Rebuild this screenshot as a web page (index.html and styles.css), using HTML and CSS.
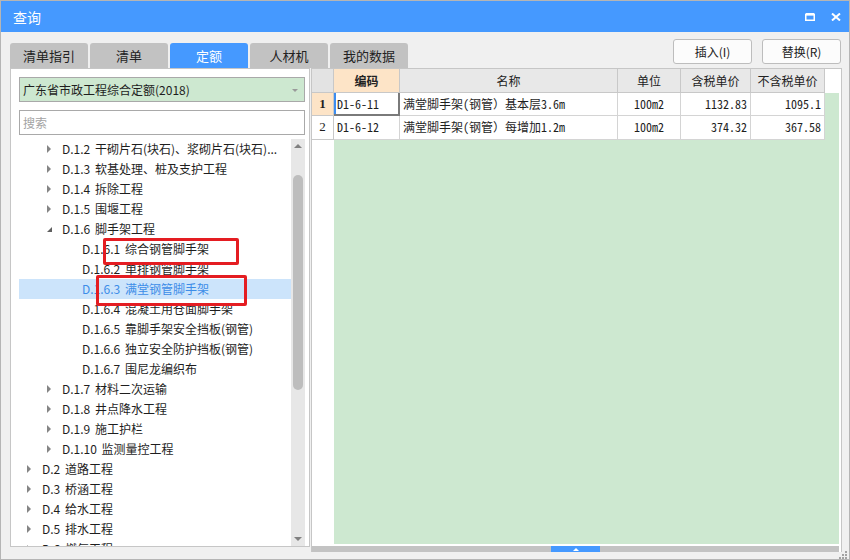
FILE: index.html
```html
<!DOCTYPE html>
<html lang="zh-CN">
<head>
    <meta charset="UTF-8">
    <title>查询</title>
    <link rel="stylesheet" href="styles.css">
</head>
<body>
    <div class="window">
        <div class="titlebar">
            <span class="title">查询</span>
            <div class="title-btns">
                <svg width="10" height="8" viewBox="0 0 10 8">
                    <path d="M0.75 1.5H9.25V7.25H0.75Z" fill="none" stroke="#fff" stroke-width="1.5"/>
                    <path d="M0.75 1.25H9.25" stroke="#fff" stroke-width="2.5"/>
                </svg>
                <svg width="10" height="8" viewBox="0 0 10 8">
                    <path d="M1 0.5L9 7.5M9 0.5L1 7.5" stroke="#fff" stroke-width="2"/>
                </svg>
            </div>
        </div>

        <div class="topbar">
            <div class="tabs">
                <div class="tab">清单指引</div>
                <div class="tab">清单</div>
                <div class="tab active">定额</div>
                <div class="tab">人材机</div>
                <div class="tab">我的数据</div>
            </div>
            <div class="actions">
                <button>插入(I)</button>
                <button>替换(R)</button>
            </div>
        </div>

        <div class="main">
            <div class="side">
                <div class="select">广东省市政工程综合定额(2018)<span class="caret"></span></div>
                <input class="search" type="text" placeholder="搜索">
                <div class="tree-wrap">
                    <ul class="tree">
                        <li class="lv2"><i class="arr"></i>D.1.2 干砌片石(块石)、浆砌片石(块石)...</li>
                        <li class="lv2"><i class="arr"></i>D.1.3 软基处理、桩及支护工程</li>
                        <li class="lv2"><i class="arr"></i>D.1.4 拆除工程</li>
                        <li class="lv2"><i class="arr"></i>D.1.5 围堰工程</li>
                        <li class="lv2"><i class="arr open"></i>D.1.6 脚手架工程</li>
                        <li class="lv3"><i class="arr none"></i>D.1.6.1 综合钢管脚手架</li>
                        <li class="lv3"><i class="arr none"></i>D.1.6.2 单排钢管脚手架</li>
                        <li class="lv3 selected"><i class="arr none"></i>D.1.6.3 满堂钢管脚手架</li>
                        <li class="lv3"><i class="arr none"></i>D.1.6.4 混凝土用仓面脚手架</li>
                        <li class="lv3"><i class="arr none"></i>D.1.6.5 靠脚手架安全挡板(钢管)</li>
                        <li class="lv3"><i class="arr none"></i>D.1.6.6 独立安全防护挡板(钢管)</li>
                        <li class="lv3"><i class="arr none"></i>D.1.6.7 围尼龙编织布</li>
                        <li class="lv2"><i class="arr"></i>D.1.7 材料二次运输</li>
                        <li class="lv2"><i class="arr"></i>D.1.8 井点降水工程</li>
                        <li class="lv2"><i class="arr"></i>D.1.9 施工护栏</li>
                        <li class="lv2"><i class="arr"></i>D.1.10 监测量控工程</li>
                        <li class="lv1"><i class="arr"></i>D.2 道路工程</li>
                        <li class="lv1"><i class="arr"></i>D.3 桥涵工程</li>
                        <li class="lv1"><i class="arr"></i>D.4 给水工程</li>
                        <li class="lv1"><i class="arr"></i>D.5 排水工程</li>
                        <li class="lv1"><i class="arr"></i>D.6 燃气工程</li>
                    </ul>
                    <div class="vscroll">
                        <span class="sc-up"></span>
                        <span class="thumb"></span>
                        <span class="sc-down"></span>
                    </div>
                </div>
                <!-- annotation boxes -->
                <div class="mark mark-1"></div>
                <div class="mark mark-2"></div>
            </div>

            <div class="grid-panel">
                <div class="grid">
                    <div class="hd corner"></div>
                    <div class="hd key">编码</div>
                    <div class="hd">名称</div>
                    <div class="hd">单位</div>
                    <div class="hd">含税单价</div>
                    <div class="hd">不含税单价</div>
                    <div class="blank"></div>

                    <div class="rh cur">1</div>
                    <div class="cell sel">D1-6-11</div>
                    <div class="cell">满堂脚手架(钢管）基本层3.6m</div>
                    <div class="cell mid">100m2</div>
                    <div class="cell num">1132.83</div>
                    <div class="cell num">1095.1</div>
                    <div class="green"></div>

                    <div class="rh">2</div>
                    <div class="cell">D1-6-12</div>
                    <div class="cell">满堂脚手架(钢管）每增加1.2m</div>
                    <div class="cell mid">100m2</div>
                    <div class="cell num">374.32</div>
                    <div class="cell num">367.58</div>
                    <div class="green"></div>

                    <div class="blank"></div>
                    <div class="green wide"></div>
                </div>
                <div class="hbar"><span class="hthumb"></span></div>
            </div>
        </div>

        <svg class="grip" width="8" height="8" viewBox="0 0 8 8">
            <rect x="6" y="0" width="2" height="2" fill="#a3a3a3"/>
            <rect x="3" y="3" width="2" height="2" fill="#a3a3a3"/>
            <rect x="6" y="3" width="2" height="2" fill="#a3a3a3"/>
            <rect x="0" y="6" width="2" height="2" fill="#a3a3a3"/>
            <rect x="3" y="6" width="2" height="2" fill="#a3a3a3"/>
            <rect x="6" y="6" width="2" height="2" fill="#a3a3a3"/>
        </svg>
    </div>
</body>
</html>
```

FILE: styles.css
```css
:root {
    --blue: #4599ff;
    --tab-grey: #c2c2c2;
    --panel-border: #c6c6c6;
    --input-border: #a9a9a9;
    --green: #cde8d0;
    --peach: #fde4c7;
    --head-grey: #e8e8e8;
    --text: #1e1e1e;
    --ui-font: "Noto Sans CJK SC", "Noto Sans", sans-serif;
    --mono-font: "Noto Sans Mono CJK SC", "Liberation Mono", "Noto Sans CJK SC", monospace;
}

* {
    margin: 0;
    padding: 0;
    box-sizing: border-box;
}

body {
    background: #ffffff;
    font-family: var(--ui-font);
    font-size: 12px;
    color: var(--text);
}

.window {
    position: relative;
    width: 850px;
    height: 560px;
    background: #f0f0f0;
    border: 1px solid #b5b5b5;
    display: flex;
    flex-direction: column;
}

/* title bar */
.titlebar {
    height: 31px;
    flex: none;
    background: var(--blue);
    display: flex;
    align-items: center;
    justify-content: space-between;
    padding: 0 8px 0 12px;
}

.title {
    color: #ffffff;
    font-size: 14px;
}

.title-btns {
    display: flex;
    gap: 16px;
    align-items: center;
}

.title-btns svg {
    display: block;
}

/* tabs + buttons */
.topbar {
    height: 36px;
    flex: none;
    display: flex;
    justify-content: space-between;
    padding: 0 8px 0 9px;
}

.tabs {
    align-self: flex-end;
    display: flex;
    gap: 2px;
}

.tab {
    width: 78px;
    height: 25px;
    line-height: 25px;
    text-align: center;
    font-size: 13px;
    background: var(--tab-grey);
    border-radius: 3px 3px 0 0;
    color: #222;
}

.tab.active {
    background: var(--blue);
    color: #ffffff;
}

.actions {
    margin-top: 7px;
    display: flex;
    gap: 10px;
}

.actions button {
    width: 79px;
    height: 25px;
    background: #fcfcfc;
    border: 1px solid #bdbdbd;
    border-radius: 3px;
    font-family: var(--ui-font);
    font-size: 12px;
    color: #222;
}

/* panels */
.main {
    display: flex;
    align-items: flex-start;
    gap: 1px;
    padding-left: 9px;
}

.side {
    position: relative;
    width: 300px;
    height: 479px;
    background: #ffffff;
    border: 1px solid var(--panel-border);
    padding: 8px 4px 0 8px;
    display: flex;
    flex-direction: column;
}

.select {
    position: relative;
    height: 25px;
    line-height: 23px;
    padding-left: 3px;
    background: var(--green);
    border: 1px solid var(--input-border);
    flex: none;
}

.caret {
    position: absolute;
    right: 6px;
    top: 11px;
    border-top: 3px solid #9a9a9a;
    border-left: 3px solid transparent;
    border-right: 3px solid transparent;
}

.search {
    margin-top: 8px;
    height: 25px;
    width: 100%;
    flex: none;
    border: 1px solid var(--input-border);
    padding-left: 3px;
    font-family: var(--ui-font);
    font-size: 12px;
    outline: none;
}

.search::placeholder {
    color: #a3a3a3;
}

.tree-wrap {
    margin-top: 4px;
    flex: 1;
    min-height: 0;
    display: flex;
}

.tree {
    flex: 1;
    list-style: none;
    overflow: hidden;
}

.tree li {
    height: 20px;
    line-height: 20px;
    white-space: nowrap;
    word-spacing: 2px;
    display: flex;
    align-items: center;
}

.tree li.lv1 { padding-left: 8px; }
.tree li.lv2 { padding-left: 28px; }
.tree li.lv3 { padding-left: 48px; }

.tree li.selected {
    background: #cce4fb;
    color: #3d8de8;
}

.arr {
    width: 15px;
    height: 20px;
    flex: none;
    position: relative;
}

.arr::before {
    content: "";
    position: absolute;
    left: 0;
    top: 6px;
    border-left: 4px solid #858585;
    border-top: 4px solid transparent;
    border-bottom: 4px solid transparent;
}

.arr.open::before {
    top: 8px;
    border-left: 5px solid transparent;
    border-top: 0;
    border-bottom: 5px solid #606060;
}

.arr.none::before {
    display: none;
}

.vscroll {
    width: 14px;
    flex: none;
    background: #e7e7e7;
    display: flex;
    flex-direction: column;
    align-items: center;
}

.sc-up,
.sc-down {
    width: 14px;
    height: 14px;
    display: flex;
    align-items: center;
    justify-content: center;
}

.sc-up::before {
    content: "";
    border-bottom: 4px solid #808080;
    border-left: 4px solid transparent;
    border-right: 4px solid transparent;
}

.sc-down {
    margin-top: auto;
}

.sc-down::before {
    content: "";
    border-top: 4px solid #808080;
    border-left: 4px solid transparent;
    border-right: 4px solid transparent;
}

.thumb {
    margin-top: 22px;
    width: 10px;
    height: 215px;
    border-radius: 5px;
    background: #bdbdbd;
}

.mark {
    position: absolute;
    border: 3px solid #e41d22;
    border-radius: 2px;
}

.mark-1 {
    left: 92px;
    top: 169px;
    width: 136px;
    height: 27px;
}

.mark-2 {
    left: 85px;
    top: 206px;
    width: 151px;
    height: 31px;
}

/* quota grid */
.grid-panel {
    width: 531px;
    height: 484px;
    background: #ffffff;
    border: 1px solid var(--panel-border);
    border-bottom: 0;
    padding-right: 2px;
    display: flex;
    flex-direction: column;
}

.grid {
    flex: 1;
    display: grid;
    grid-template-columns: 22px 66px 218px 63px 70px 74px 1fr;
    grid-template-rows: 24px 23px 24px 1fr;
    padding-bottom: 2px;
}

.hd {
    background: var(--head-grey);
    border-right: 1px solid #c8c8c8;
    border-bottom: 1px solid #c8c8c8;
    text-align: center;
    line-height: 23px;
    color: #222;
}

.hd.corner {
    background: #e3e3e3;
}

.hd.key {
    background: var(--peach);
    font-weight: bold;
}

.rh {
    border-right: 1px solid #c8c8c8;
    border-bottom: 1px solid #c8c8c8;
    text-align: center;
    font-family: "Liberation Serif", serif;
    font-size: 13px;
    line-height: 22px;
}

.rh.cur {
    background: var(--peach);
    font-weight: bold;
}

.cell {
    border-right: 1px solid #d4d4d4;
    border-bottom: 1px solid #d4d4d4;
    padding: 0 3px;
    font-family: var(--mono-font);
    font-size: 12px;
    line-height: 22px;
    white-space: nowrap;
    overflow: hidden;
}

.cell.mid {
    text-align: center;
}

.cell.num {
    text-align: right;
}

.cell.sel {
    border-right: 2px solid #7a7a7a;
    border-bottom: 2px solid #7a7a7a;
    box-shadow: inset 2px 0 0 #3c8df0;
}

.green {
    background: var(--green);
}

.green.wide {
    grid-column: 2 / -1;
}

.hbar {
    height: 6px;
    flex: none;
    background: #c3c3c3;
    display: flex;
    justify-content: center;
}

.hthumb {
    width: 49px;
    background: var(--blue);
    display: flex;
    justify-content: center;
    align-items: center;
}

.hthumb::before {
    content: "";
    border-bottom: 3px solid #ffffff;
    border-left: 3px solid transparent;
    border-right: 3px solid transparent;
}

.grip {
    position: absolute;
    right: 2px;
    bottom: 0;
}
```
